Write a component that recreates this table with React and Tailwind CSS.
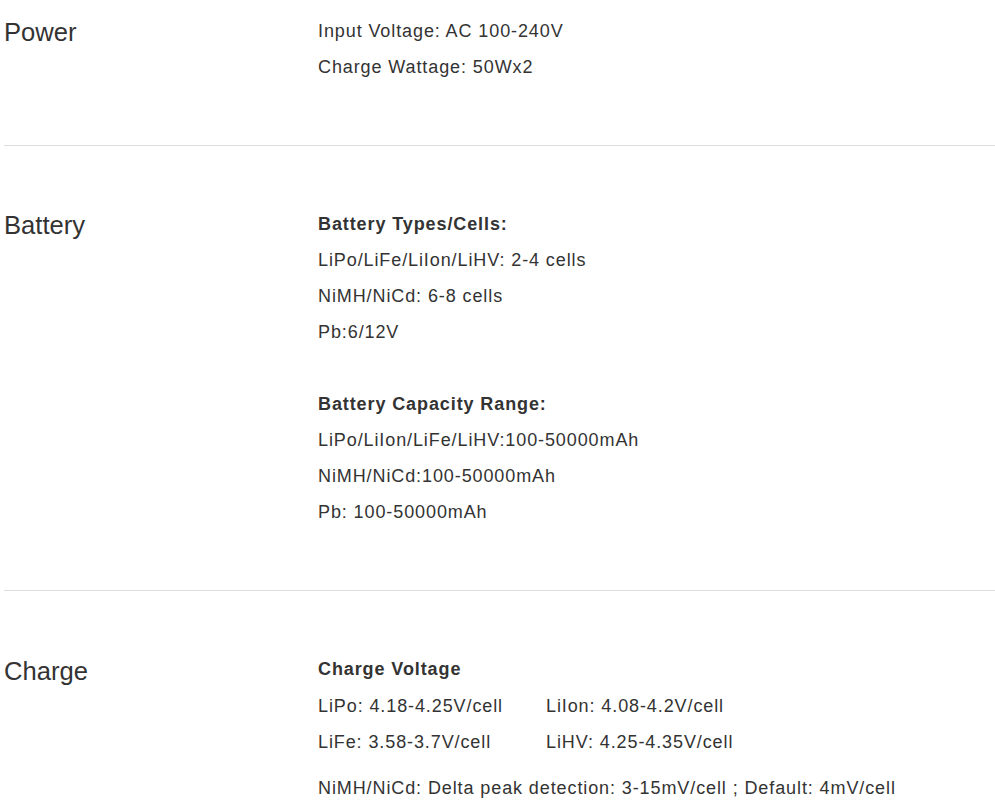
const sections = [
  {
    title: 'Power',
    first: true,
    groups: [{ lines: ['Input Voltage: AC 100-240V', 'Charge Wattage: 50Wx2'] }],
  },
  {
    title: 'Battery',
    groups: [
      {
        heading: 'Battery Types/Cells:',
        lines: ['LiPo/LiFe/LiIon/LiHV: 2-4 cells', 'NiMH/NiCd: 6-8 cells', 'Pb:6/12V'],
      },
      {
        heading: 'Battery Capacity Range:',
        lines: ['LiPo/LiIon/LiFe/LiHV:100-50000mAh', 'NiMH/NiCd:100-50000mAh', 'Pb: 100-50000mAh'],
      },
    ],
  },
];

function SpecRow({ title, first, children }) {
  return (
    <div
      className={`flex ${first ? 'pt-[13px]' : 'pt-[60px]'} pb-[60px] border-b border-[#dddddd]`}
    >
      <div className="w-[314px] shrink-0 text-[25.6px] leading-[36px] pt-[1px] text-[#333333]">
        {title}
      </div>
      <div className="flex-1 text-[18px] leading-[36px] tracking-[0.9px] text-[#333333]">
        {children}
      </div>
    </div>
  );
}

export default function App() {
  return (
    <div
      className="bg-white min-h-screen pl-[4px] overflow-hidden"
      style={{ fontFamily: '"Liberation Sans", Arial, sans-serif' }}
    >
      {sections.map((s) => (
        <SpecRow key={s.title} title={s.title} first={s.first}>
          {s.groups.map((g, i) => (
            <div key={i} className={i > 0 ? 'mt-[36px]' : ''}>
              {g.heading && <div className="font-bold">{g.heading}</div>}
              {g.lines.map((line) => (
                <div key={line}>{line}</div>
              ))}
            </div>
          ))}
        </SpecRow>
      ))}

      <div className="flex pt-[60px] pb-[60px]">
        <div className="w-[314px] shrink-0 text-[25.6px] leading-[36px] pt-[2px] text-[#333333]">
          Charge
        </div>
        <div className="flex-1 text-[18px] leading-[36px] tracking-[0.9px] text-[#333333]">
          <div className="font-bold">Charge Voltage</div>
          <div className="grid grid-cols-[228px_auto] mt-[1px]">
            <div>LiPo: 4.18-4.25V/cell</div>
            <div>LiIon: 4.08-4.2V/cell</div>
            <div>LiFe: 3.58-3.7V/cell</div>
            <div>LiHV: 4.25-4.35V/cell</div>
          </div>
          <div className="mt-[10px]">NiMH/NiCd: Delta peak detection: 3-15mV/cell ; Default: 4mV/cell</div>
        </div>
      </div>
    </div>
  );
}
